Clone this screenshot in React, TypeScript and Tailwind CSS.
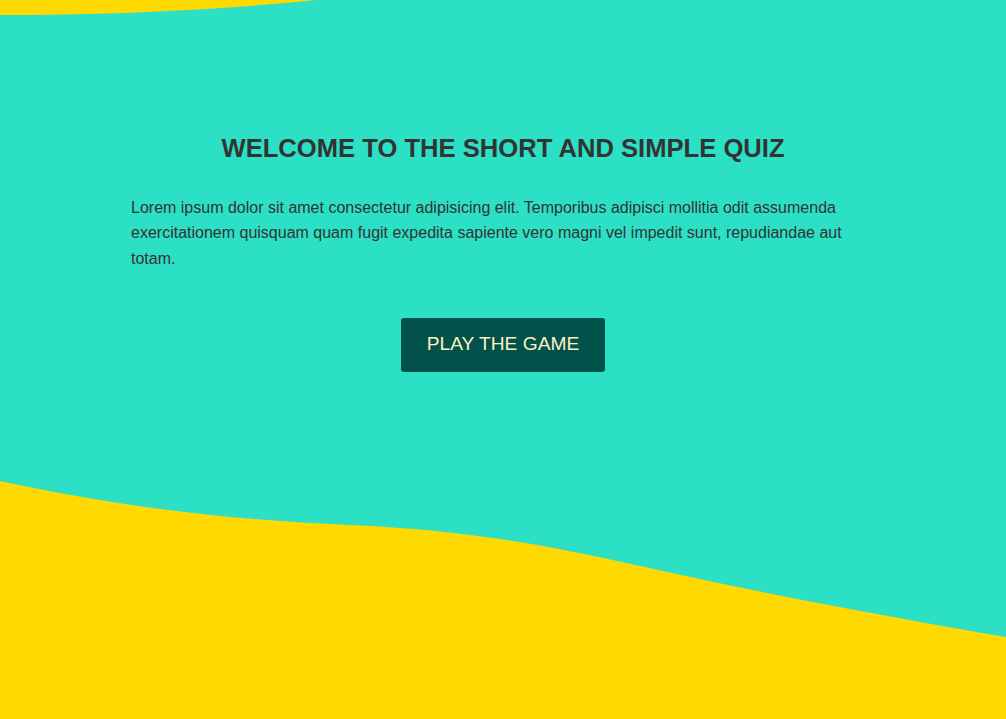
export default function App() {
  return (
    <main
      className="relative h-[719px] w-full overflow-hidden bg-[#2ce0c6]"
      style={{ fontFamily: '"Liberation Sans", Arial, sans-serif' }}
    >
      {/* decorative waves */}
      <svg
        className="absolute left-0 top-0"
        width="1006"
        height="719"
        viewBox="0 0 1006 719"
        aria-hidden="true"
      >
        <path d="M0 0 L316 0 C220 10 110 15 0 15 Z" fill="#ffd900" />
        <path
          d="M0 481 C120 507 230 520 350 525 C460 530 540 543 640 566 C760 593 880 615 1006 637 L1006 719 L0 719 Z"
          fill="#ffd900"
        />
      </svg>

      <section className="relative mx-auto w-[744px] pt-[133px]">
        <h1 className="text-center text-[25.6px] font-bold leading-[30px] text-[#333333]">
          WELCOME TO THE SHORT AND SIMPLE QUIZ
        </h1>
        <p className="mt-[32px] text-[16px] leading-[25.3px] text-[#333333]">
          Lorem ipsum dolor sit amet consectetur adipisicing elit. Temporibus adipisci mollitia odit
          assumenda exercitationem quisquam quam fugit expedita sapiente vero magni vel impedit sunt,
          repudiandae aut totam.
        </p>
        <div className="mt-[47px] flex justify-center">
          <button className="flex h-[54px] w-[204px] items-center justify-center rounded-[3px] bg-[#00524a] text-[19.2px] text-[#fff0c4]">
            PLAY THE GAME
          </button>
        </div>
      </section>
    </main>
  );
}
